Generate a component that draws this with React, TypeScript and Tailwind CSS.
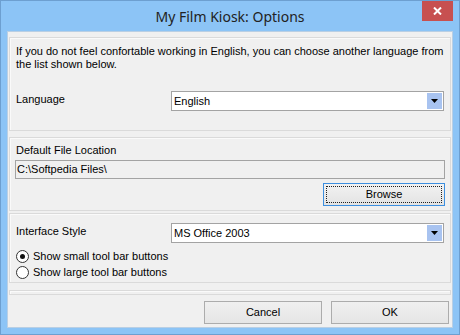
import React from 'react';

function ComboBox({ value }: { value: string }) {
  return (
    <div className="flex h-[20px] w-[273px] items-stretch border border-[#a3a3a3] bg-white p-px">
      <div className="flex flex-1 items-center pl-[1px] text-[11px] leading-none">{value}</div>
      <div className="flex w-[15px] items-center justify-center bg-[#a8c3f0]">
        <svg width="7" height="4" viewBox="0 0 7 4" aria-hidden="true">
          <path d="M0 0h7L3.5 4z" fill="#000" />
        </svg>
      </div>
    </div>
  );
}

function Radio({ checked, label }: { checked?: boolean; label: string }) {
  return (
    <div className="flex h-[16px] items-center gap-[4px]">
      <div className="flex h-[13px] w-[13px] items-center justify-center rounded-full border border-[#333] bg-white">
        {checked && <div className="h-[5px] w-[5px] rounded-full bg-[#111]" />}
      </div>
      <span>{label}</span>
    </div>
  );
}

function Panel({ className, children }: { className?: string; children?: React.ReactNode }) {
  return (
    <div className={`border border-[#dadada] shadow-[inset_1px_1px_0_#fafafa] ${className ?? ''}`}>
      {children}
    </div>
  );
}

export default function App() {
  return (
    <div
      className="flex h-[335px] w-[460px] flex-col border border-[#6d9fd0] bg-[#8cc4f6] text-black"
      style={{ fontFamily: '"Liberation Sans", Arial, sans-serif' }}
    >
      {/* title bar */}
      <div className="relative flex h-[30px] items-center justify-center">
        <span
          className="pt-[1px] text-[14px] text-[#222]"
          style={{ fontFamily: '"Noto Sans", "Open Sans", sans-serif' }}
        >
          My Film Kiosk: Options
        </span>
        <button
          aria-label="Close"
          className="absolute right-[6px] top-0 flex h-[20px] w-[31px] items-center justify-center bg-[#c75050]"
        >
          <svg width="9" height="8" viewBox="0 0 9 8" aria-hidden="true">
            <path d="M1 0.5l7 7M8 0.5l-7 7" stroke="#fff" strokeWidth="2" />
          </svg>
        </button>
      </div>

      {/* client area */}
      <div className="mx-[6px] mb-[6px] flex flex-1 flex-col border border-[#b9cfe4] bg-[#f0f0f0] px-[1px] pt-[5px] text-[11px] leading-[13px]">
        <Panel className="h-[94px] px-[6px] pt-[7px]">
          <p className="w-[430px]">
            If you do not feel confortable working in English, you can choose another language from
            the list shown below.
          </p>
          <div className="mt-[20px] flex items-center justify-between">
            <span className="-mt-[3px]">Language</span>
            <ComboBox value="English" />
          </div>
        </Panel>

        <Panel className="mt-[6px] h-[74px] px-[5px] pt-[6px]">
          <div className="pl-px">Default File Location</div>
          <div className="mt-[3px] flex h-[19px] items-center border border-[#a3a3a3] bg-[#f0f0f0] pl-px">
            C:\Softpedia Files\
          </div>
          <div className="mt-[4px] flex justify-end">
            <button className="flex h-[23px] w-[122px] items-center justify-center border border-[#3c8fe0] bg-gradient-to-b from-[#f2f2f2] to-[#e3e3e3] p-[2px]">
              <span className="flex h-full w-full items-center justify-center border border-dotted border-[#222]">
                Browse
              </span>
            </button>
          </div>
        </Panel>

        <Panel className="mt-[2px] h-[70px] px-[6px] pt-[9px]">
          <div className="flex items-center justify-between">
            <span className="-mt-[3px]">Interface Style</span>
            <ComboBox value="MS Office 2003" />
          </div>
          <div className="mt-[5px] flex flex-col">
            <Radio checked label="Show small tool bar buttons" />
            <Radio label="Show large tool bar buttons" />
          </div>
        </Panel>

        <Panel className="mt-[7px] h-[5px]" />

        <div className="mt-[6px] flex justify-end gap-[9px] pr-[2px]">
          <button className="h-[23px] w-[118px] border border-[#acacac] bg-gradient-to-b from-[#f0f0f0] to-[#e5e5e5]">
            Cancel
          </button>
          <button className="h-[23px] w-[118px] border border-[#acacac] bg-gradient-to-b from-[#f0f0f0] to-[#e5e5e5]">
            OK
          </button>
        </div>
      </div>
    </div>
  );
}
